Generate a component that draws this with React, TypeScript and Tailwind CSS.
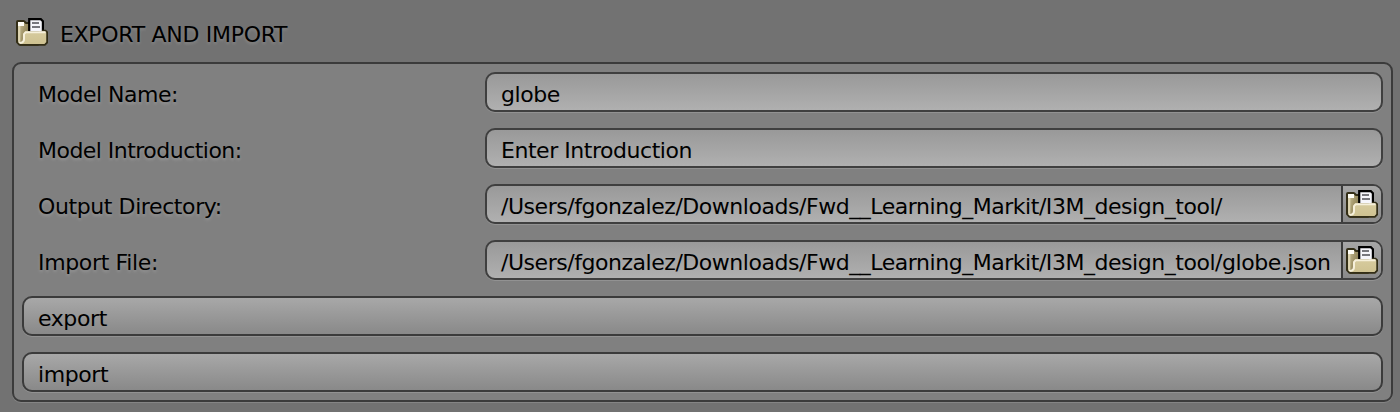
import React from "react";

function FolderIcon() {
  return (
    <svg width="32" height="28" viewBox="0 0 32 28" className="block shrink-0">
      <defs>
        <linearGradient id="back" x1="0" y1="0" x2="1" y2="0.3">
          <stop offset="0" stopColor="#d6cda6" />
          <stop offset="0.4" stopColor="#a3976b" />
          <stop offset="1" stopColor="#6c6238" />
        </linearGradient>
        <linearGradient id="front" x1="0" y1="0" x2="0" y2="1">
          <stop offset="0" stopColor="#d6cb9e" />
          <stop offset="1" stopColor="#cfc291" />
        </linearGradient>
      </defs>
      <path d="M1 4Q1 3 2 3H7.5Q8.5 3 9 4T10.5 5H14V14H22V26.8H3.5L1 24Z" fill="url(#back)" stroke="#332e16" strokeWidth="2" strokeLinejoin="round" />
      <path d="M2 4H8V8H2Z" fill="#fffef6" />
      <path d="M3.2 8V23" stroke="#ded5b2" strokeWidth="2.2" />
      <path d="M13.2 13V1.2H24.8L26.9 3.2V13" fill="#f6f6fb" stroke="#000" strokeWidth="2.2" />
      <path d="M16 5H23M16 9H24" stroke="#77777d" strokeWidth="2" />
      <path d="M26 12.6H29.5L31.1 14.2V24.5L28.8 26.9H4" fill="none" stroke="#332e16" strokeWidth="1.9" />
      <path d="M9 13.5H29.3L30.2 14.5V24L28.3 26H4.5Q8 24.5 8 21V14.5Z" fill="url(#front)" />
      <path d="M3 23.5Q3.5 25.2 5.5 24.8Q8 24 8 21V16.2L9.8 14.2H29.5" fill="none" stroke="#f6f0da" strokeWidth="2" />
    </svg>
  );
}

const path = "/Users/fgonzalez/Downloads/Fwd__Learning_Markit/I3M_design_tool/";
const rows = [
  { label: "Model Name:", value: "globe", browse: false, tracking: "tracking-[-0.5px]" },
  { label: "Model Introduction:", value: "Enter Introduction", browse: false, tracking: "tracking-[-0.53px]" },
  { label: "Output Directory:", value: path, browse: true, tracking: "tracking-[-0.4px]" },
  { label: "Import File:", value: path + "globe.json", browse: true, tracking: "tracking-[-0.35px]" },
];

export default function App() {
  return (
    <main className="h-[412px] w-[1400px] overflow-hidden bg-[#727272] pl-3 font-['DejaVu_Sans',sans-serif] text-[22px] leading-[26px] tracking-[-0.46px] whitespace-pre text-black">
      <header className="flex h-[62px] items-start pt-[18px] pl-1">
        <FolderIcon />
        <h1 className="ml-3 pt-1 tracking-[-0.3px] [text-shadow:0_2px_3px_#888]">EXPORT AND IMPORT</h1>
      </header>
      <section className="flex h-[340px] w-[1381px] flex-col gap-4 rounded-[9px] border-2 border-[#3b3b3b] bg-[#808080] p-2 shadow-[0_1px_0_#858585]">
        {rows.map((row) => (
          <div key={row.label} className="flex h-10 shrink-0">
            <label className={`w-[463px] pt-[10px] pl-4 [text-shadow:0_2px_3px_#969696] ${row.tracking}`}>{row.label}</label>
            <div className="flex w-[898px] overflow-hidden rounded-[10px] border-2 border-[#3f3f3f] bg-linear-to-b from-[#999] to-[#b0b0b0] shadow-[0_1px_0_#929292]">
              <span className="grow pt-2 pl-[14px]">{row.value}</span>
              {row.browse && (
                <button className="flex w-10 shrink-0 border-l-2 border-[#3b3b3b] bg-linear-to-b from-[#a6a6a6] to-[#8a8a8a] pt-1 pl-[3px]">
                  <FolderIcon />
                </button>
              )}
            </div>
          </div>
        ))}
        {["export", "import"].map((name) => (
          <button key={name} className="flex h-10 w-[1361px] shrink-0 rounded-[10px] border-2 border-[#3b3b3b] bg-linear-to-b from-[#a8a8a8] to-[#898989] pt-2 pl-[14px] text-left tracking-[-0.4px] shadow-[0_1px_0_#929292]">
            {name}
          </button>
        ))}
      </section>
    </main>
  );
}
